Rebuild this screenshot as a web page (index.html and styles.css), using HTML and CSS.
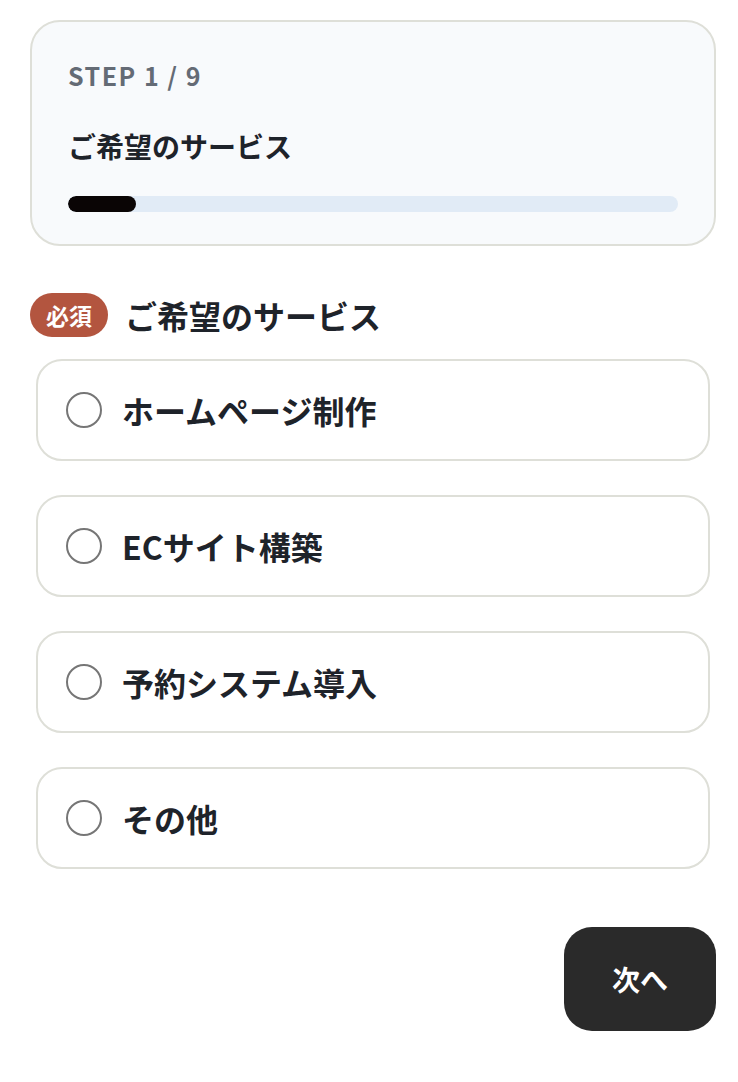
FILE: index.html
```html
<!DOCTYPE html>
<html lang="ja">
<head>
<meta charset="utf-8">
<title>ご希望のサービス</title>
<link rel="stylesheet" href="styles.css">
</head>
<body>
<main class="page">
  <section class="step-card">
    <div class="step-label">STEP 1 / 9</div>
    <h1 class="step-title">ご希望のサービス</h1>
    <div class="progress"><div class="progress-fill" style="width: 11.11%"></div></div>
  </section>

  <div class="question">
    <span class="badge">必須</span>
    <h2 class="question-title">ご希望のサービス</h2>
  </div>

  <div class="options">
    <label class="option"><span class="radio"></span><span class="option-text">ホームページ制作</span></label>
    <label class="option"><span class="radio"></span><span class="option-text">ECサイト構築</span></label>
    <label class="option"><span class="radio"></span><span class="option-text">予約システム導入</span></label>
    <label class="option"><span class="radio"></span><span class="option-text">その他</span></label>
  </div>

  <div class="actions">
    <button class="next-btn" type="button">次へ</button>
  </div>
</main>
</body>
</html>
```

FILE: styles.css
```css
* { box-sizing: border-box; }

html, body {
  margin: 0;
  padding: 0;
  background: #ffffff;
}

body {
  font-family: "Noto Sans CJK JP", "Noto Sans", sans-serif;
  color: #1e232a;
}

.page {
  width: 686px;
  margin-left: 30px;
  padding-top: 20px;
  display: flex;
  flex-direction: column;
}

.step-card {
  background: #f8fafc;
  border: 2px solid #dedfd8;
  border-radius: 30px;
  padding: 37px 36px 32px;
}

.step-label {
  font-size: 25px;
  line-height: 32px;
  font-weight: 700;
  letter-spacing: 1.5px;
  color: #646b75;
}

.step-title {
  margin: 35px 0 0;
  font-size: 28px;
  line-height: 40px;
  font-weight: 700;
  color: #1e232a;
}

.progress {
  margin-top: 30px;
  height: 16px;
  border-radius: 8px;
  background: #e1ebf6;
  overflow: hidden;
}

.progress-fill {
  height: 100%;
  border-radius: 8px;
  background: #0a0505;
}

.question {
  margin-top: 47px;
  display: flex;
  align-items: center;
  gap: 17px;
}

.badge {
  height: 44px;
  padding: 0 16px;
  border-radius: 22px;
  background: #b3553f;
  color: #ffffff;
  font-size: 23px;
  font-weight: 700;
  line-height: 44px;
}

.question-title {
  margin: 0;
  font-size: 32px;
  line-height: 44px;
  font-weight: 700;
  color: #1e232a;
}

.options {
  margin: 22px 6px 0;
  display: flex;
  flex-direction: column;
  gap: 34px;
}

.option {
  height: 102px;
  border: 2px solid #dedfd8;
  border-radius: 26px;
  background: #ffffff;
  padding: 0 28px;
  display: flex;
  align-items: center;
  gap: 20px;
}

.radio {
  width: 36px;
  height: 36px;
  border: 2px solid #767676;
  border-radius: 50%;
  flex: none;
}

.option-text {
  font-size: 32px;
  font-weight: 700;
  line-height: 44px;
  color: #1e232a;
}

.actions {
  margin-top: 58px;
  display: flex;
  justify-content: flex-end;
}

.next-btn {
  width: 152px;
  height: 104px;
  border: none;
  border-radius: 28px;
  background: #2a2a2a;
  color: #ffffff;
  font-family: "Noto Sans CJK JP", "Noto Sans", sans-serif;
  font-size: 28px;
  font-weight: 700;
}
```
